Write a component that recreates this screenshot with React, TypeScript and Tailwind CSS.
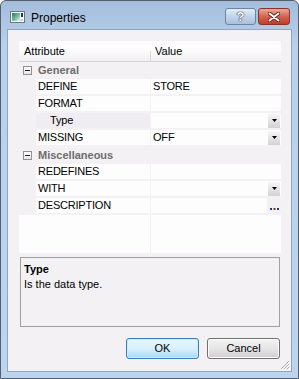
import React from "react";

const BG = "bg-[#f3f1f4]";

function DropBtn() {
  return (
    <span className="ml-auto mr-[1px] flex h-[14px] w-[12px] items-center justify-center bg-gradient-to-b from-[#f7f7f7] to-[#d2d2d2]">
      <svg width="5" height="3" viewBox="0 0 5 3">
        <path d="M0 0h5L2.5 3z" fill="#000" />
      </svg>
    </span>
  );
}

function EllipsisBtn() {
  return (
    <span className={`ml-auto flex h-[15px] w-[14px] items-end justify-center pb-[3px] ${BG}`}>
      <svg width="9" height="2" viewBox="0 0 9 2">
        <rect x="0" y="0" width="2" height="2" fill="#1a3b8c" />
        <rect x="3.5" y="0" width="2" height="2" fill="#6b3a1a" />
        <rect x="7" y="0" width="2" height="2" fill="#1a3b8c" />
      </svg>
    </span>
  );
}

function Category({ label }: { label: string }) {
  return (
    <div className={`flex h-[17px] items-center ${BG}`}>
      <span className="ml-[4px] flex h-[9px] w-[9px] items-center justify-center border border-[#929292] bg-gradient-to-b from-[#ffffff] to-[#e6e6e6]">
        <span className="h-[1px] w-[5px] bg-[#222]" />
      </span>
      <span className="ml-[6px] text-[11px] font-bold leading-none text-[#6d6d6d]">{label}</span>
    </div>
  );
}

function Row({
  name,
  value,
  indent,
  selected,
  extra,
}: {
  name: string;
  value?: string;
  indent?: boolean;
  selected?: boolean;
  extra?: React.ReactNode;
}) {
  return (
    <div className={`flex h-[17px] ${BG}`}>
      <div className="w-[17px] shrink-0" />
      <div
        className={`flex h-[15px] w-[114px] shrink-0 items-center ${
          selected ? "bg-[#efedf1]" : "bg-[#fcfdfc]"
        } ${indent ? "pl-[14px]" : "pl-[2px]"}`}
      >
        <span className="text-[11px] leading-none text-black tracking-[-0.2px]">{name}</span>
      </div>
      <div className="ml-[1px] flex h-[15px] flex-1 items-center bg-[#fcfdfc] pl-[2px]">
        {value ? <span className="text-[11px] leading-none text-black tracking-[-0.2px]">{value}</span> : null}
        {extra}
      </div>
    </div>
  );
}

export default function App() {
  return (
    <div className="h-[379px] w-[299px] overflow-hidden bg-white font-['Liberation_Sans',Arial,sans-serif]">
      <div className="relative flex h-[379px] w-[299px] flex-col rounded-t-[6px] border border-[#56606c] bg-gradient-to-b from-[#a3bddb] via-[#bad1eb] via-[12%] to-[#bcd4ee]">
        {/* Title bar */}
        <div className="flex h-[28px] shrink-0 items-center pl-[9px] pr-[8px]">
          <svg width="15" height="12" viewBox="0 0 15 12" className="mt-[4px]">
            <defs>
              <linearGradient id="ig" x1="0" y1="0" x2="1" y2="1">
                <stop offset="0" stopColor="#1f7f6a" />
                <stop offset="0.6" stopColor="#7fc0a8" />
                <stop offset="1" stopColor="#ffffff" />
              </linearGradient>
            </defs>
            <rect x="0.5" y="0.5" width="14" height="11" fill="#f4f6f8" stroke="#6d7782" />
            <rect x="2" y="2" width="8" height="8" fill="url(#ig)" />
            <rect x="11" y="2" width="2" height="4" fill="#2a3340" />
            <rect x="10" y="8" width="3" height="2" fill="#c9d3dd" />
          </svg>
          <span className="ml-[6px] mt-[6px] text-[12px] leading-none text-black">Properties</span>
          <div className="ml-auto mt-[3px] flex gap-[2px]">
            <div className="flex h-[17px] w-[31px] items-center justify-center rounded-[3px] border border-[#6a84a6] bg-gradient-to-b from-[#e3ecf6] via-[#c3d4e8] to-[#a9c0db]">
              <span className="text-[13px] font-bold leading-none text-white [text-shadow:0_0_1px_#2c3e56,0_0_1px_#2c3e56,0_0_1px_#2c3e56]">
                ?
              </span>
            </div>
            <div className="flex h-[17px] w-[32px] items-center justify-center rounded-[3px] border border-[#8a3428] bg-gradient-to-b from-[#e9a899] via-[#d4644f] to-[#c23d28]">
              <svg width="12" height="10" viewBox="0 0 12 10">
                <path d="M1.5 1.5l9 7M10.5 1.5l-9 7" stroke="#5a1e14" strokeWidth="3.6" strokeLinecap="round" />
                <path d="M1.5 1.5l9 7M10.5 1.5l-9 7" stroke="#ffffff" strokeWidth="2" strokeLinecap="round" />
              </svg>
            </div>
          </div>
        </div>

        {/* Client area */}
        <div className={`relative mx-[6px] mb-[6px] flex flex-1 flex-col border border-[#8fa6c1] ${BG} pb-[11px] pl-[11px] pr-[10px] pt-[11px]`}>
          {/* Property grid */}
          <div className="flex h-[212px] flex-col bg-[#fcfdfc]">
            <div className="flex h-[21px] shrink-0 border-b border-[#d3d3d6] bg-gradient-to-b from-[#fcfdfc] from-[45%] to-[#f1eff2]">
              <div className="flex w-[131px] items-end pb-[4px] pl-[5px]">
                <span className="text-[11px] leading-none text-black">Attribute</span>
              </div>
              <div className="mt-[10px] h-[10px] w-[1px] bg-[#d6d6d8]" />
              <div className="flex flex-1 items-end pb-[4px] pl-[4px]">
                <span className="text-[11px] leading-none text-black">Value</span>
              </div>
            </div>
            <Category label="General" />
            <Row name="DEFINE" value="STORE" />
            <Row name="FORMAT" />
            <Row name="Type" indent selected extra={<DropBtn />} />
            <Row name="MISSING" value="OFF" extra={<DropBtn />} />
            <Category label="Miscellaneous" />
            <Row name="REDEFINES" />
            <Row name="WITH" extra={<DropBtn />} />
            <Row name="DESCRIPTION" extra={<EllipsisBtn />} />
            <div className="flex flex-1">
              <div className="w-[131px]" />
              <div className="w-[1px] bg-[#f0eef1]" />
            </div>
          </div>

          {/* Description */}
          <div className="ml-[1px] mr-[1px] mt-[4px] flex h-[70px] flex-col border border-[#a0a0a0] pl-[3px] pt-[4px]">
            <span className="text-[11px] font-bold leading-[15px] text-black">Type</span>
            <span className="text-[11px] leading-[15px] text-black">Is the data type.</span>
          </div>

          {/* Buttons */}
          <div className="mt-[11px] flex justify-end gap-[8px] pr-[1px]">
            <div className="flex h-[21px] w-[73px] items-center justify-center rounded-[3px] border border-[#3c7fb1] bg-gradient-to-b from-[#eaf6fd] via-[#d9f0fc] to-[#a7d9f5] shadow-[inset_0_0_0_1px_#c8ecff]">
              <span className="text-[11px] leading-none text-black">OK</span>
            </div>
            <div className="flex h-[21px] w-[73px] items-center justify-center rounded-[3px] border border-[#707070] bg-gradient-to-b from-[#f2f2f2] via-[#e6e6e6] to-[#cfcfcf] shadow-[inset_0_0_0_1px_#fbfbfb]">
              <span className="text-[11px] leading-none text-black">Cancel</span>
            </div>
          </div>

          {/* Resize grip */}
          <svg width="10" height="10" viewBox="0 0 10 10" className="absolute bottom-[1px] right-[1px]">
            <path d="M9 1L1 9M9 4L4 9M9 7L7 9" stroke="#a8a8a8" strokeWidth="1" />
            <path d="M10 2L2 10M10 5L5 10M10 8L8 10" stroke="#ffffff" strokeWidth="1" />
          </svg>
        </div>
      </div>
    </div>
  );
}
